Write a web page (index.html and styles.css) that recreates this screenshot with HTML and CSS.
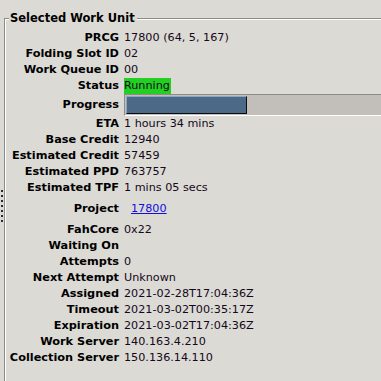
FILE: index.html
```html
<!DOCTYPE html>
<html>
<head>
<meta name="viewport" content="width=device-width, initial-scale=1.0">
<link rel="stylesheet" href="styles.css">
<title>Selected Work Unit</title>
</head>
<body>
<div class="grip"><span></span><span></span><span></span><span></span><span></span><span></span><span></span></div>
<div class="panel">
<div class="head">
<div class="corner"></div>
<div class="title">Selected Work Unit</div>
<div class="rule"></div>
</div>
<div class="body">
<div class="rows">
<div class="lbl">PRCG</div><div class="val">17800 (64, 5, 167)</div>
<div class="lbl">Folding Slot ID</div><div class="val">02</div>
<div class="lbl">Work Queue ID</div><div class="val">00</div>
<div class="lbl">Status</div><div class="val"><span class="running">Running</span></div>
<div class="lbl prog">Progress</div><div class="val prog"><div class="trough"><div class="bar" style="width:121px"></div></div></div>
<div class="lbl">ETA</div><div class="val">1 hours 34 mins</div>
<div class="lbl">Base Credit</div><div class="val">12940</div>
<div class="lbl">Estimated Credit</div><div class="val">57459</div>
<div class="lbl">Estimated PPD</div><div class="val">763757</div>
<div class="lbl">Estimated TPF</div><div class="val">1 mins 05 secs</div>
<div class="lbl tall">Project</div><div class="val tall"><a href="#" class="link">17800</a></div>
<div class="lbl">FahCore</div><div class="val">0x22</div>
<div class="lbl">Waiting On</div><div class="val"></div>
<div class="lbl">Attempts</div><div class="val">0</div>
<div class="lbl">Next Attempt</div><div class="val">Unknown</div>
<div class="lbl">Assigned</div><div class="val">2021-02-28T17:04:36Z</div>
<div class="lbl">Timeout</div><div class="val">2021-03-02T00:35:17Z</div>
<div class="lbl">Expiration</div><div class="val">2021-03-02T17:04:36Z</div>
<div class="lbl">Work Server</div><div class="val">140.163.4.210</div>
<div class="lbl">Collection Server</div><div class="val">150.136.14.110</div>
</div>
</div>
</div>
</body>
</html>
```
FILE: styles.css
```css
html,body{
margin:0;
height:100%;
}
body{
background:#dcdad5;
color:#000;
font-family:"DejaVu Sans",Verdana,sans-serif;
overflow:hidden;
position:relative;
}
.grip{
position:absolute;
left:1px;
top:190px;
display:flex;
flex-direction:column;
gap:3px;
}
.grip span{
display:block;
width:2px;
height:2px;
background:#2a2a2a;
}
.panel{
padding-left:4px;
padding-top:10px;
height:100%;
box-sizing:border-box;
display:flex;
flex-direction:column;
}
.head{
display:flex;
height:16px;
}
.corner{
width:4px;
margin-top:8px;
border-top:1px solid #8e8c88;
border-left:1px solid #8e8c88;
box-shadow:inset 1px 1px 0 #fff;
}
.title{
font-weight:bold;
font-size:11.5px;
line-height:16px;
padding:0 2px 0 1px;
}
.rule{
flex:1;
margin-top:8px;
height:0;
border-top:1px solid #8e8c88;
border-bottom:1px solid #fff;
}
.body{
flex:1;
border-left:1px solid #8e8c88;
}
.rows{
height:100%;
border-left:1px solid #fff;
display:grid;
grid-template-columns:113px 1fr;
column-gap:5px;
align-content:start;
padding-top:4px;
}
.lbl{
font-weight:bold;
font-size:11.3px;
height:16px;
line-height:16px;
text-align:right;
white-space:nowrap;
}
.val{
font-size:11.2px;
height:16px;
line-height:16px;
white-space:nowrap;
color:#14081a;
}
.running{
background:#22d022;
display:inline-block;
height:17px;
padding-right:1px;
}
.lbl.prog,.val.prog{
height:22px;
line-height:22px;
}
.trough{
height:22px;
background:#c2bfba;
border-top:1px solid #8e8c88;
border-left:1px solid #8e8c88;
border-bottom:1px solid #fff;
box-sizing:border-box;
padding:1px;
margin-right:-10px;
}
.bar{
height:100%;
box-sizing:border-box;
background:#4c6987;
border-top:1px solid #8aa6c2;
border-left:1px solid #8aa6c2;
border-right:1px solid #0c0c0c;
border-bottom:1px solid #0c0c0c;
}
.lbl.tall,.val.tall{
height:26px;
line-height:26px;
}
.link{
color:#1010e0;
margin-left:7px;
}
```
